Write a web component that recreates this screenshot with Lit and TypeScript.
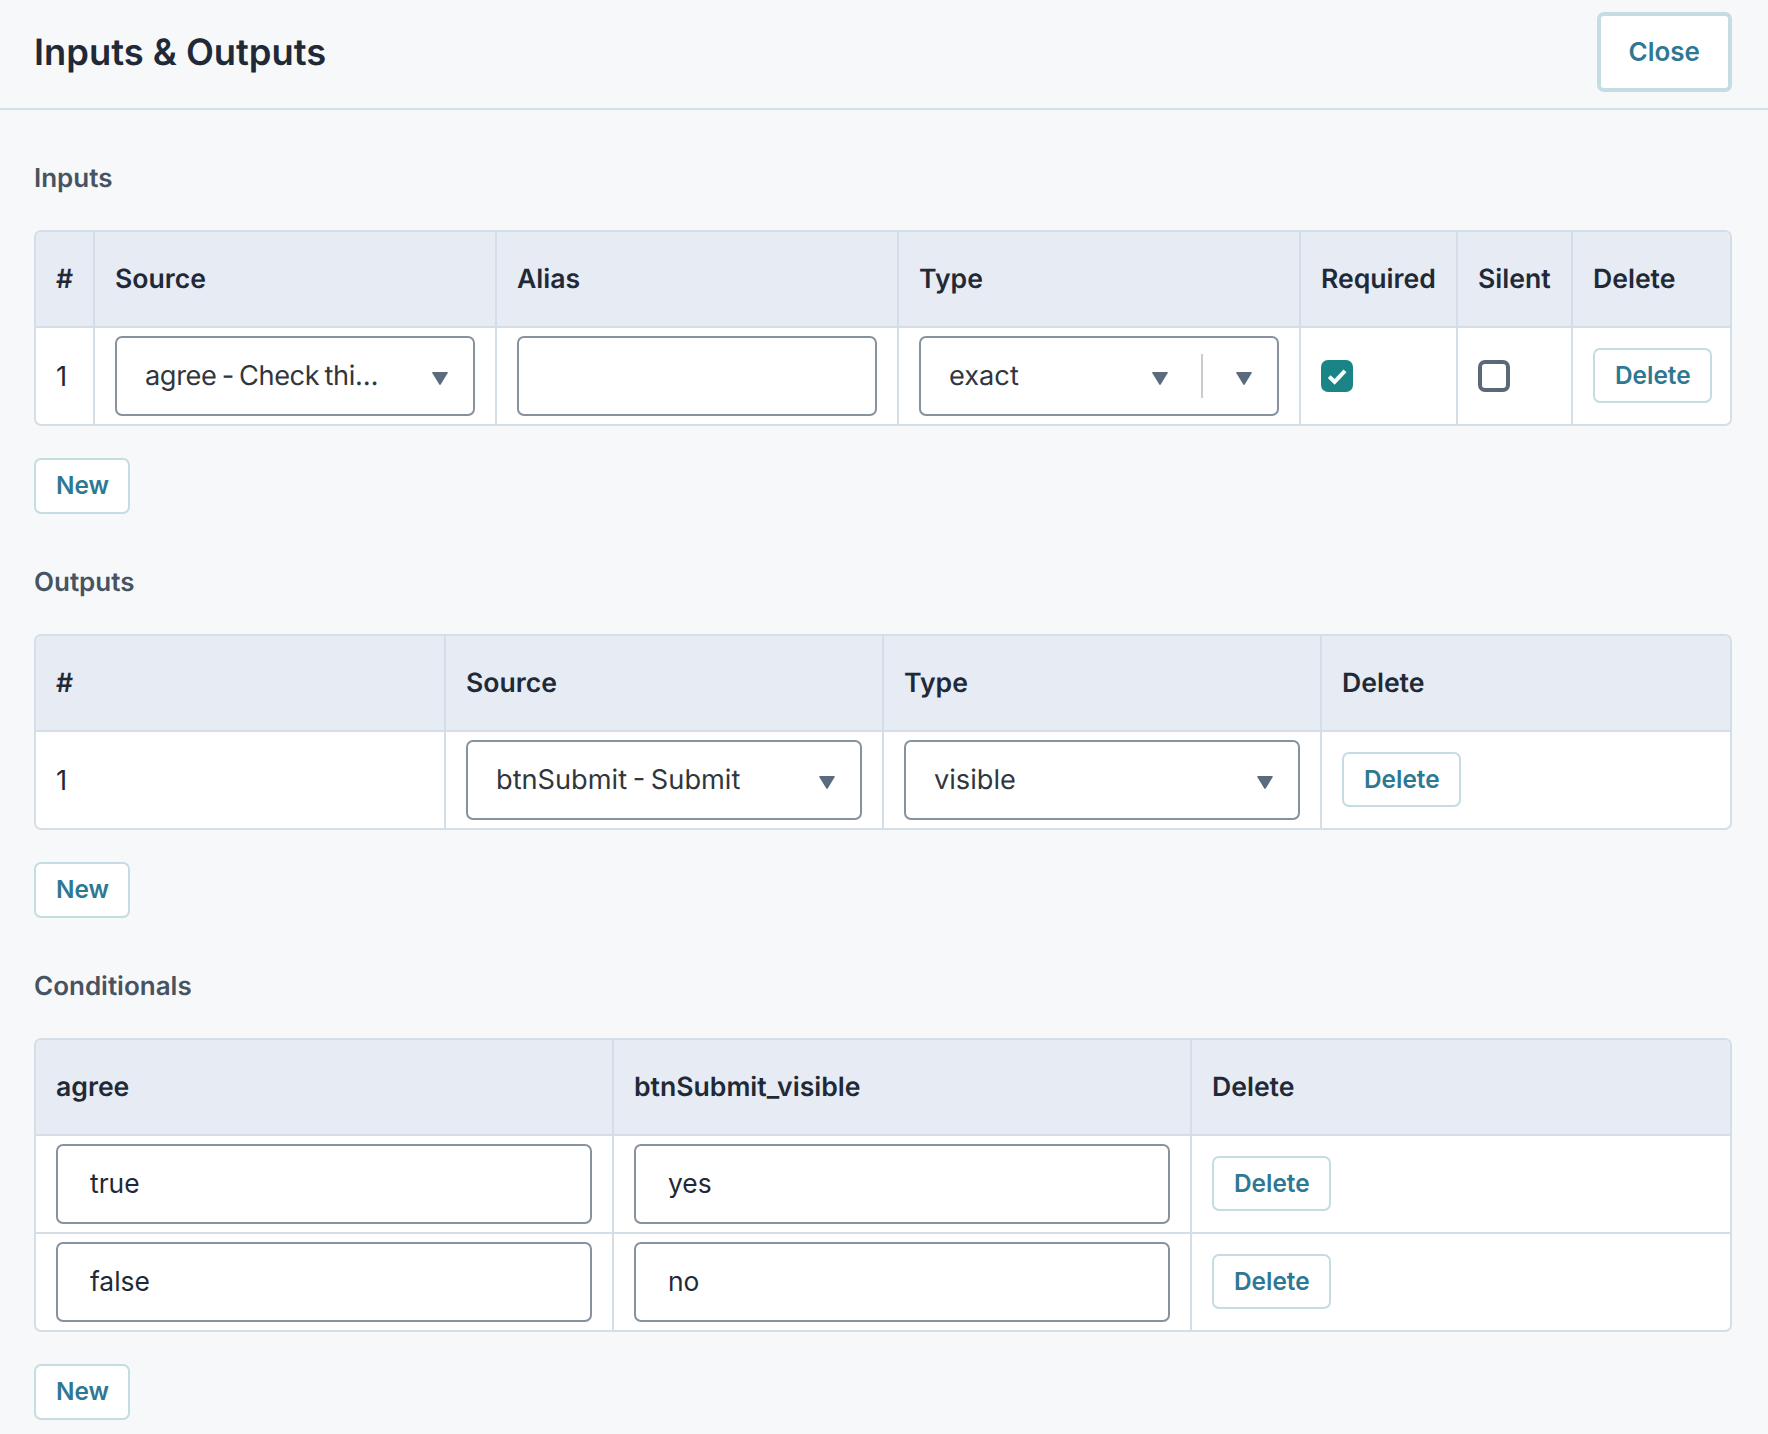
import { LitElement, html, css } from "lit";
import { customElement } from "lit/decorators.js";

const arrow = html`<svg class="arrow" viewBox="0 0 16 12" aria-hidden="true"><path d="M1 1.2Q.3 0 1.6 0H14.4Q15.7 0 15 1.2L8.8 11.4Q8 12.4 7.2 11.4Z" /></svg>`;
const check = html`<svg viewBox="0 0 32 32" aria-hidden="true"><path d="M8.2 16.6 13.6 21.8 24 10.8" fill="none" stroke="#fff" stroke-width="4" /></svg>`;

@customElement("app-root")
export class AppRoot extends LitElement {
  static styles = css`
    :host {
      display: block;
      min-height: 1434px;
      background: #f7f8fa;
      font-family: Inter, "Liberation Sans", sans-serif;
      color: #1f2937;
      text-rendering: geometricPrecision;
    }
    * { box-sizing: border-box; }
    .bar {
      display: flex;
      align-items: center;
      justify-content: space-between;
      height: 110px;
      padding: 0 36px 5px 34px;
      border-bottom: 2px solid #d3e0e8;
    }
    h1 {
      margin: 0;
      font-size: 36.3px;
      line-height: 44px;
      font-weight: 600;
      color: #1f2937;
    }
    .content { padding: 51px 36px 0 34px; }
    section { margin-bottom: 51px; }
    h2 {
      margin: 0 0 35px;
      height: 34px;
      font-size: 26px;
      line-height: 36px;
      font-weight: 600;
      color: #475361;
    }
    .card {
      border: 2px solid #d3dee7;
      border-radius: 7px;
      overflow: hidden;
      background: #fff;
    }
    table {
      width: 100%;
      table-layout: fixed;
      border-collapse: separate;
      border-spacing: 0;
    }
    th, td {
      padding: 8px 20px;
      border-right: 2px solid #d3dee7;
      text-align: left;
      font-size: 26.6px;
    }
    th:last-child, td:last-child { border-right: 0; }
    th {
      height: 96px;
      background: #e7ebf3;
      border-bottom: 2px solid #d3dee7;
      font-weight: 600;
      color: #1f2937;
    }
    td { height: 96px; font-weight: 400; font-size: 27.5px; color: #1f2937; }
    tr + tr td { border-top: 2px solid #d3dee7; height: 98px; }
    .c-num { width: 59px; }
    .c-wide { width: 402px; }
    .c-req { width: 157px; }
    .c-sil { width: 115px; }
    .o-num { width: 410px; }
    .o-src { width: 438px; }
    .o-typ { width: 438px; }
    .v-a { width: 578px; }
    .v-b { width: 578px; }
    .control {
      display: flex;
      align-items: center;
      width: 100%;
      height: 80px;
      padding: 0 24px 0 28px;
      background: #fff;
      border: 2px solid #87929f;
      border-radius: 7px;
      font: 400 27.2px Inter, "Liberation Sans", sans-serif;
      word-spacing: -2px;
      color: #31363c;
    }
    .value { flex: 1; white-space: nowrap; overflow: hidden; padding-bottom: 2px; }
    .clipped { letter-spacing: -0.4px; }
    .ell { letter-spacing: -2px; }
    .sep { width: 2px; height: 44px; margin: 0 32px; background: #ccc; }
    .arrow { width: 18px; height: 13px; fill: #5a6b7d; margin-top: 5px; flex: none; }
    input.control { display: block; padding: 0 32px 2px; font-size: 26.4px; word-spacing: 0; color: #1f2937; outline: none; }
    .box {
      display: block;
      width: 32px;
      height: 32px;
      border-radius: 7px;
    }
    .box svg { display: block; width: 32px; height: 32px; }
    .on { background: #1b8486; }
    .off { background: #fff; border: 4px solid #5b6879; }
    button {
      display: block;
      height: 55px;
      padding: 0 19px 2px 20px;
      background: #fff;
      border: 2px solid #c4dce2;
      border-radius: 7px;
      font: 600 24.4px Inter, "Liberation Sans", sans-serif;
      color: #2f7893;
    }
    td button { margin-bottom: 1px; }
    .new { margin-top: 32px; height: 56px; }
    .close { height: 80px; padding: 0 28px; border-width: 4px; font-size: 26px; }
  `;

  private select(text: string, extra = false, ellipsis = false) {
    return html`<div class="control" role="combobox">
      <span class="value ${ellipsis ? "clipped" : ""}">${text}${ellipsis ? html`<span class="ell">…</span>` : ""}</span>${arrow}${extra ? html`<span class="sep"></span>${arrow}` : ""}
    </div>`;
  }

  private del() {
    return html`<button>Delete</button>`;
  }

  render() {
    return html`
      <header class="bar">
        <h1>Inputs &amp; Outputs</h1>
        <button class="close">Close</button>
      </header>
      <div class="content">
        <section>
          <h2>Inputs</h2>
          <div class="card">
            <table>
              <colgroup>
                <col class="c-num" /><col class="c-wide" /><col class="c-wide" /><col class="c-wide" />
                <col class="c-req" /><col class="c-sil" /><col />
              </colgroup>
              <thead>
                <tr><th>#</th><th>Source</th><th>Alias</th><th>Type</th><th>Required</th><th>Silent</th><th>Delete</th></tr>
              </thead>
              <tbody>
                <tr>
                  <td>1</td>
                  <td>${this.select("agree - Check thi", false, true)}</td>
                  <td><input class="control" aria-label="Alias" /></td>
                  <td>${this.select("exact", true)}</td>
                  <td><span class="box on" role="checkbox" aria-checked="true">${check}</span></td>
                  <td><span class="box off" role="checkbox" aria-checked="false"></span></td>
                  <td>${this.del()}</td>
                </tr>
              </tbody>
            </table>
          </div>
          <button class="new">New</button>
        </section>
        <section>
          <h2>Outputs</h2>
          <div class="card">
            <table>
              <colgroup><col class="o-num" /><col class="o-src" /><col class="o-typ" /><col /></colgroup>
              <thead><tr><th>#</th><th>Source</th><th>Type</th><th>Delete</th></tr></thead>
              <tbody>
                <tr>
                  <td>1</td>
                  <td>${this.select("btnSubmit - Submit")}</td>
                  <td>${this.select("visible")}</td>
                  <td>${this.del()}</td>
                </tr>
              </tbody>
            </table>
          </div>
          <button class="new">New</button>
        </section>
        <section>
          <h2>Conditionals</h2>
          <div class="card">
            <table>
              <colgroup><col class="v-a" /><col class="v-b" /><col /></colgroup>
              <thead><tr><th>agree</th><th>btnSubmit_visible</th><th>Delete</th></tr></thead>
              <tbody>
                <tr>
                  <td><input class="control" value="true" aria-label="agree" /></td>
                  <td><input class="control" value="yes" aria-label="btnSubmit_visible" /></td>
                  <td>${this.del()}</td>
                </tr>
                <tr>
                  <td><input class="control" value="false" aria-label="agree" /></td>
                  <td><input class="control" value="no" aria-label="btnSubmit_visible" /></td>
                  <td>${this.del()}</td>
                </tr>
              </tbody>
            </table>
          </div>
          <button class="new">New</button>
        </section>
      </div>
    `;
  }
}
